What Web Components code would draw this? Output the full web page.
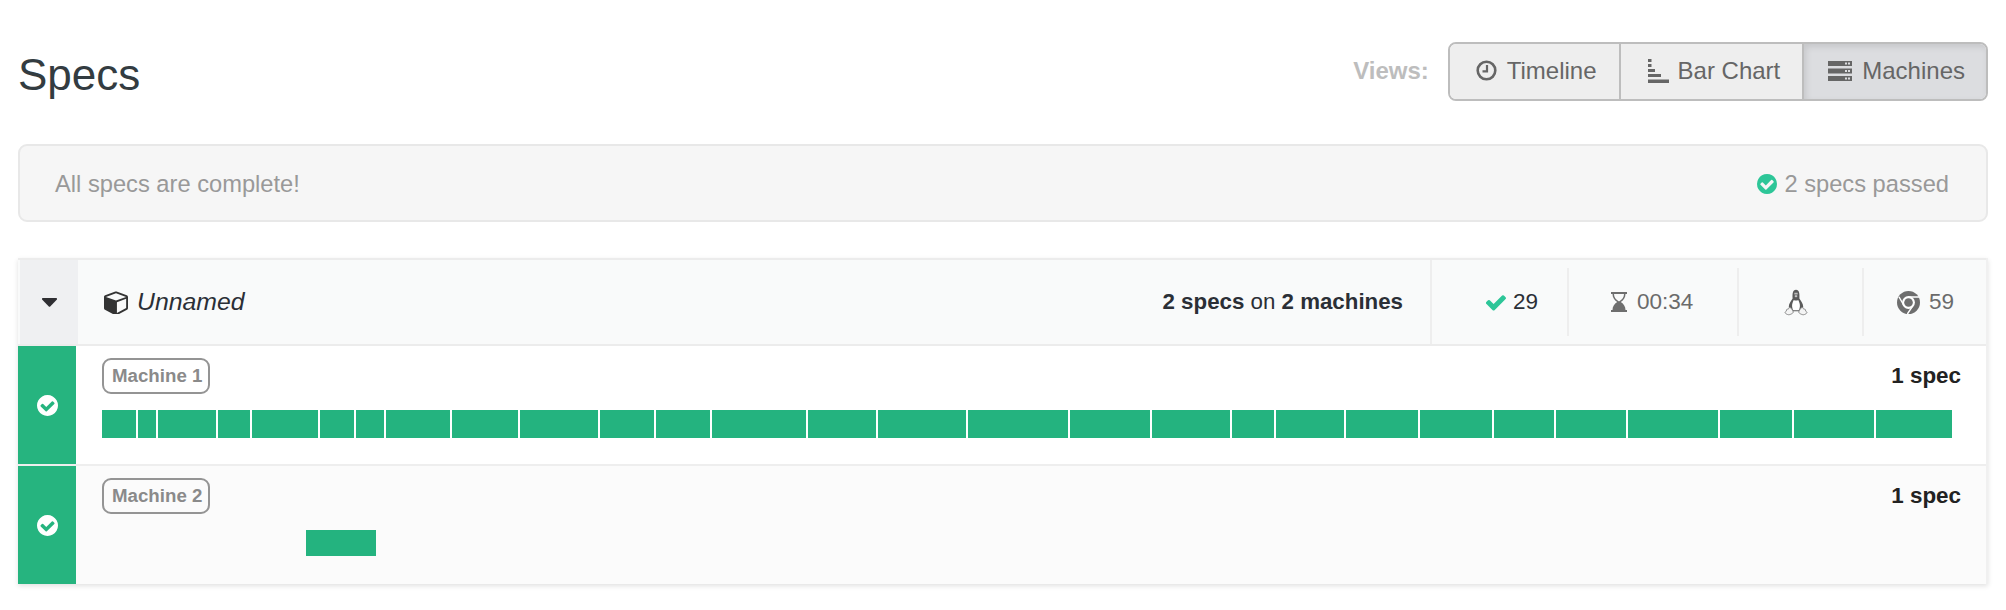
<!DOCTYPE html>
<html><head><meta charset="utf-8">
<style>
html,body{margin:0;background:#fff;font-family:"Liberation Sans",Arial,sans-serif;}
spec-page{display:block;padding-bottom:26px}
</style></head><body>
<spec-page>
  <page-header title="Specs">
    <view-button icon="clock">Timeline</view-button>
    <view-button icon="bars" style="padding-left:27px;gap:9px">Bar Chart</view-button>
    <view-button icon="server" active>Machines</view-button>
  </page-header>
  <status-alert message="All specs are complete!" summary="2 specs passed"></status-alert>
  <run-group name="Unnamed">
    <machine-row label="Machine 1" count="1 spec" segments="34,18,58,32,66,34,28,64,66,78,54,54,94,68,88,100,80,78,42,68,72,72,60,70,90,72,80,76"></machine-row>
    <machine-row label="Machine 2" count="1 spec" alt offset="204" segments="70"></machine-row>
  </run-group>
</spec-page>
<script>
const P={
 check:'M1671 566q0 40-28 68l-724 724-136 136q-28 28-68 28t-68-28l-136-136-362-362q-28-28-28-68t28-68l136-136q28-28 68-28t68 28l294 295 656-657q28-28 68-28t68 28l136 136q28 28 28 68z',
 checkCircle:'M1412 734q0-28-18-46l-91-90q-19-19-45-19t-45 19l-408 407-226-226q-19-19-45-19t-45 19l-91 90q-18 18-18 46 0 27 18 45l362 362q19 19 45 19 27 0 46-19l543-543q18-18 18-45zm252 162q0 209-103 385.5t-279.5 279.5-385.5 103-385.5-103-279.5-279.5-103-385.5 103-385.5 279.5-279.5 385.5-103 385.5 103 279.5 279.5 103 385.5z',
 cube:'M896 1629l640-349v-636l-640 233v752zm-64-865l698-254-698-254-698 254zm832-252v768q0 35-18 65t-50 47l-704 384q-28 16-61 16t-61-16l-704-384q-32-17-50-47t-18-65v-768q0-40 23-73t61-49l704-256q22-8 44-8t44 8l704 256q38 16 61 49t23 73z'
};
const ICONS={
 clock:`<svg width="21" height="21" viewBox="0 0 21 21" fill="none" stroke="#666"><circle cx="10.5" cy="10.5" r="8.8" stroke-width="2.6"/><path d="M11 5v6.4H6.5" stroke-width="2.2"/></svg>`,
 bars:`<svg width="21" height="24" viewBox="0 0 21 24" fill="#666"><rect x="0" y="0" width="3.5" height="3"/><rect x="0" y="5" width="3.5" height="3"/><rect x="0" y="10" width="7" height="3"/><rect x="0" y="15" width="13" height="3"/><rect x="0" y="20.500" width="21" height="3.5"/></svg>`,
 server:`<svg width="24" height="20" viewBox="0 0 24 20" fill="#666"><path fill-rule="evenodd" d="M0 0h24v5H0zM17 1.500v2h2v-2zM20 1.500v2h2v-2zM0 7.500h24v5H0zM17 9v2h2V9zM20 9v2h2V9zM0 15h24v5H0zM17 16.500v2h2v-2zM20 16.500v2h2v-2z"/></svg>`,
 hourglass:`<svg width="16" height="20" viewBox="0 0 16 20"><path fill="#6e6e6e" d="M0 0h16v2h-1.500c0 3.400-1.800 6.200-4.700 8 2.900 1.800 4.700 4.600 4.700 8H16v2H0v-2h1.500c0-3.400 1.800-6.200 4.700-8C3.300 8.200 1.500 5.400 1.500 2H0zM3 2c0 3 1.800 5.600 4.600 7.300h.8C11.200 7.600 13 5 13 2z"/></svg>`,
 linux:`<svg width="24" height="27" viewBox="0 0 24 27"><path fill="#5a5a5a" d="M8.600 9.500C8.300 5 8.600 .8 12 .8s3.700 4.200 3.400 8.700c1.700 2.500 3.800 5.300 3.800 8.300 0 1.900-.7 3.400-1.700 4.400H7.500C5.900 20.900 4.800 19.400 4.800 17.800c0-3 2.100-5.800 3.800-8.300z"/><path fill="#fff" d="M9.800 11c1.200.7 3.200.7 4.400 0 1.100 2 1.900 4.300 1.700 6.500-.1 1.400-.5 2.800-1.200 3.800H9.300c-.7-1-1.100-2.400-1.200-3.800-.2-2.200.6-4.500 1.700-6.500z"/><path fill="#fff" d="M10.600 3.800h1v1.700h-1zM12.400 3.800h1v1.700h-1z"/><path fill="#ccc" d="M10.300 7l1.700-.9 1.700.9-1.700 1.400z"/><path fill="#f4f4f4" stroke="#8a8a8a" d="M5.800 18.500c1.200 0 2.700 2.200 3.500 4.500.3 1-3.800 3.500-5.800 2.500C2 25 1 24 1 23.500s1.700-1 1.500-2.500c0-1 1.500-.8 2-1 .3-.5 0-1.500 1.300-1.500zM18.200 18.500c-1.200 0-2.700 2.200-3.500 4.500-.3 1 3.800 3.500 5.800 2.500 1.500-.5 2.500-1.500 2.500-2s-1.700-1-1.500-2.500c0-1-1.500-.8-2-1-.3-.5 0-1.500-1.300-1.500z"/></svg>`,
 chrome:`<svg width="23" height="23" viewBox="0 0 24 24"><circle cx="12" cy="12" r="12" fill="#6e6e6e"/><circle cx="12" cy="12" r="6.700" fill="#fff"/><circle cx="12" cy="12" r="4.500" fill="#6e6e6e"/><path d="M12 6.200H23M7.400 15.400L2 6M16.300 15.800L10.800 24" stroke="#fff" stroke-width="1.500" fill="none"/></svg>`
};
function fa(name,w,h,color,vb){return `<svg width="${w}" height="${h}" viewBox="${vb}" fill="${color}"><path d="${P[name]}"/></svg>`}
const CC='128 128 1536 1536';

class PageHeader extends HTMLElement{constructor(){super();this.attachShadow({mode:'open'}).innerHTML=`<style>
:host{display:flex;align-items:center;justify-content:space-between;height:59px;padding:42px 18px 43px;}
h1{margin:0;padding-top:6px;font:400 44px/59px "Liberation Sans",sans-serif;color:#333c41;}
.r{display:flex;align-items:center}
.v{font-weight:700;font-size:24px;color:#bdbdbd;margin-right:19px;padding-bottom:2px}
.g{display:flex;height:59px;box-sizing:border-box;border:2px solid #bdbdbd;border-radius:8px;overflow:hidden}
</style><h1>${this.getAttribute('title')}</h1><div class="r"><span class="v">Views:</span><div class="g"><slot></slot></div></div>`}}
customElements.define('page-header',PageHeader);

class ViewButton extends HTMLElement{constructor(){super();const s=this.attachShadow({mode:'open'});s.innerHTML=`<style>
:host{display:flex;align-items:center;justify-content:center;gap:10px;height:100%;box-sizing:border-box;background:#eeeeee;color:#666;font-size:24px;padding:0 22px 2px 26px;border-right:2px solid #bdbdbd}
:host([active]){background:#dcdde0;border-right:0;box-shadow:inset 2px 3px 6px rgba(0,0,0,.1);padding:0 21px 2px 24px}
svg{display:block;flex:none}
</style>${ICONS[this.getAttribute('icon')]}<slot></slot>`}}
customElements.define('view-button',ViewButton);

class StatusAlert extends HTMLElement{constructor(){super();this.attachShadow({mode:'open'}).innerHTML=`<style>
:host{display:flex;align-items:center;justify-content:space-between;margin:0 18px 36px;height:78px;box-sizing:border-box;background:#f6f6f6;border:2px solid #e8e8e8;border-radius:9px;padding:2px 37px 0 35px;color:#999;font-size:23.7px}
.s{display:flex;align-items:center;gap:7px}svg{display:block}
</style><span>${this.getAttribute('message')}</span><span class="s">${fa('checkCircle',20,20,'#2dc698',CC)}${this.getAttribute('summary')}</span>`}}
customElements.define('status-alert',StatusAlert);

class RunGroup extends HTMLElement{constructor(){super();this.attachShadow({mode:'open'}).innerHTML=`<style>
:host{display:block;margin:0 18px;box-shadow:0 2px 5px rgba(0,0,0,.12);border-right:2px solid #f0f0f0}
.h{display:flex;background:#f9fafa;border-top:2px solid #ececec;border-bottom:2px solid #ececec;height:84px;font-size:22.3px;color:#2b2f36}
.c{width:58px;margin-left:2px;background:#eff0f2;display:flex;align-items:center;justify-content:center;flex:none}
.n{flex:1;display:flex;align-items:center;padding-left:26px;gap:9px;border-right:2px solid #eeeeee}
.n em{font-size:24.8px}
.n b{margin-left:auto;margin-right:27px;font-weight:700}.n b span{font-weight:400}
.st{display:flex;align-items:center;position:relative;flex:none;color:#6b6b6b;font-size:22.5px;box-sizing:border-box}
.st+.st::before{content:"";position:absolute;left:-2px;top:8px;bottom:8px;width:2px;background:#eeeeee}
.dk{color:#2b2f36}svg{display:block;flex:none}
</style><div class="h"><div class="c"><svg width="15" height="9" viewBox="0 0 15 9"><path fill="#2f2f33" d="M1 0h13c.9 0 1.300 1 .7 1.700L8.200 8.500c-.4.400-1 .4-1.400 0L.3 1.700C-.3 1 .1 0 1 0z"/></svg></div>
<div class="n">${fa('cube',24,23,'#333','0 128 1664 1536')}<em>${this.getAttribute('name')}</em><b>2 specs <span>on</span> 2 machines</b></div>
<div class="st dk" style="width:135px;padding-left:54px;gap:7px">${fa('check',20,17,'#2dc698','128 300 1544 1192')}<span>29</span></div>
<div class="st" style="width:168px;margin-left:2px;padding-left:42px;gap:10px">${ICONS.hourglass}<span>00:34</span></div>
<div class="st" style="width:123px;margin-left:2px;padding-left:45px">${ICONS.linux}</div>
<div class="st" style="width:122px;margin-left:2px;padding-left:33px;gap:9px">${ICONS.chrome}<span>59</span></div>
</div><slot></slot>`}}
customElements.define('run-group',RunGroup);

class MachineRow extends HTMLElement{constructor(){super();const segs=this.getAttribute('segments').split(',');const alt=this.hasAttribute('alt');this.attachShadow({mode:'open'}).innerHTML=`<style>
:host{display:flex;height:118px;background:${alt?'#fbfbfb':'#fff'};color:#222}
:host(:not([alt])){border-bottom:2px solid #eeeeee}
.g{width:58px;background:#26b47f;display:flex;align-items:center;justify-content:center;flex:none}
.m{flex:1;padding:12px 25px 0 26px}
.t{display:flex;justify-content:space-between;align-items:center;height:36px}
.b{box-sizing:border-box;width:108px;height:36px;border:2px solid #949494;border-radius:9px;font-weight:700;font-size:18.7px;color:#8a8a8a;line-height:32px;padding-left:8px;white-space:nowrap}
.c{font-weight:700;font-size:22.4px;color:#222}
.s{display:flex;gap:2px;margin-top:16px;margin-left:${this.getAttribute('offset')||0}px}
.s i{display:block;height:${alt?26:28}px;background:#24b37f}
svg{display:block}
</style><div class="g">${fa('checkCircle',21,21,'#fff',CC)}</div><div class="m"><div class="t"><span class="b">${this.getAttribute('label')}</span><span class="c">${this.getAttribute('count')}</span></div><div class="s">${segs.map(w=>`<i style="width:${w}px"></i>`).join('')}</div></div>`}}
customElements.define('machine-row',MachineRow);
</script>
</body></html>
